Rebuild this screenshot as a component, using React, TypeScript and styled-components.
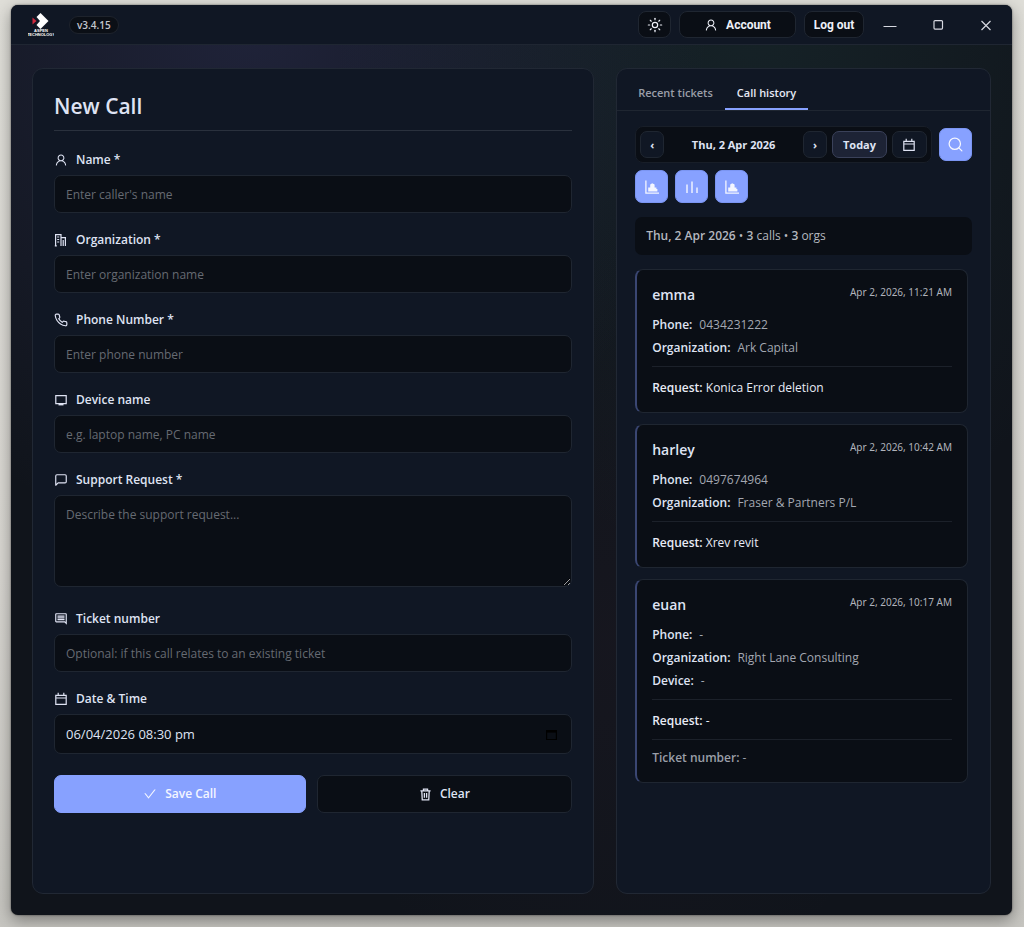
import React, { useState } from "react";
import styled, { createGlobalStyle, css } from "styled-components";
import { LuSun, LuMessageSquare, LuPhone, LuSearch } from "react-icons/lu";
import { AiOutlineUser, AiOutlineCheck } from "react-icons/ai";
import { MdOutlineComment } from "react-icons/md";

const c = {
  text: "#dfe3f3",
  muted: "#9a9ea8",
  line: "#1f2631",
  panel: "#101724",
  well: "#0a0e15",
  accent: "#87a1ff",
};

const GlobalStyle = createGlobalStyle`
  * { box-sizing: border-box; }
  body {
    margin: 0;
    min-height: 100vh;
    background: linear-gradient(180deg, #dfded8 0%, #d8d6d1 60%, #c6c5c0 100%);
    color: ${c.text};
    font-family: "Open Sans", "Noto Sans", sans-serif;
    font-size: 12px;
    line-height: 18px;
  }
  button, input, textarea { font: inherit; color: inherit; }
  button { cursor: pointer; padding: 0; }
  svg { display: block; flex: none; }
`;

const AppWindow = styled.div`
  display: flex;
  flex-direction: column;
  min-height: calc(100vh - 17px);
  margin: 5px 12px 12px 11px;
  border-radius: 7px;
  overflow: hidden;
  box-shadow: 0 0 2px rgba(0, 0, 0, 0.6), 0 5px 16px rgba(0, 0, 0, 0.38);
  background:
    radial-gradient(ellipse 460px 560px at 24% 0%, rgba(110, 110, 210, 0.17), transparent),
    radial-gradient(ellipse 420px 560px at 74% 0%, rgba(60, 130, 120, 0.13), transparent),
    radial-gradient(ellipse 300px 400px at 60% 70%, rgba(120, 60, 90, 0.06), transparent),
    #10141b;
`;

const TitleBar = styled.header`
  display: flex;
  align-items: center;
  height: 40px;
  padding: 0 19px 0 17px;
  background: #101724;
  border-bottom: 1px solid #1f2632;
`;

const Version = styled.span`
  margin-left: 15px;
  padding: 0 7px;
  border: 1px solid #1e232c;
  border-radius: 9px;
  background: #0b0f16;
  color: #c3c6ce;
  font-size: 10px;
  font-weight: 600;
  line-height: 16px;
`;

const TitleActions = styled.div`
  display: flex;
  gap: 8px;
  margin-left: auto;
`;

const TitleButton = styled.button<{ $width: number }>`
  display: flex;
  align-items: center;
  justify-content: center;
  gap: 8px;
  width: ${(p) => p.$width}px;
  height: 27px;
  border: 1px solid ${c.line};
  border-radius: 8px;
  background: ${c.well};
  font-family: Roboto, sans-serif;
  font-size: 12px;
  font-weight: 700;
  color: #eef0f8;
`;

const WindowControls = styled.div`
  display: flex;
  gap: 34px;
  margin-left: 19px;
`;

const WindowButton = styled.button`
  display: grid;
  place-items: center;
  width: 14px;
  height: 20px;
  border: 0;
  background: none;
  color: #d6d8e0;
`;

const Main = styled.main`
  display: grid;
  grid-template-columns: 3fr 2fr;
  gap: 22px;
  flex: 1;
  padding: 23px 21px 21px;
`;

const Panel = styled.section`
  min-width: 0;
  border: 1px solid #212834;
  border-radius: 11px;
  background: ${c.panel};
`;

const FormPanel = styled(Panel)`
  padding: 21px;
`;

const Title = styled.h1`
  margin: 0 0 20px;
  padding: 1px 0 9px;
  border-bottom: 1px solid #2a313d;
  font-size: 21px;
  font-weight: 600;
  line-height: 30px;
`;

const Form = styled.form`
  display: flex;
  flex-direction: column;
  gap: 18px;
`;

const Field = styled.div`
  display: flex;
  flex-direction: column;
  gap: 6px;
`;

const FieldLabel = styled.label`
  display: flex;
  align-items: center;
  gap: 8px;
  font-weight: 600;
`;

const wellStyle = css`
  width: 100%;
  border: 1px solid ${c.line};
  border-radius: 7px;
  outline: none;
  background: ${c.well};
`;

const TextInput = styled.input`
  ${wellStyle}
  height: 38px;
  padding: 0 11px;
  &::placeholder { color: #666a72; opacity: 1; }
`;

const TextArea = styled.textarea`
  ${wellStyle}
  display: block;
  height: 92px;
  margin-bottom: 5px;
  padding: 10px 11px;
  resize: vertical;
  &::placeholder { color: #666a72; opacity: 1; }
`;

const DateBox = styled.div`
  ${wellStyle}
  display: flex;
  align-items: center;
  height: 40px;
  padding: 0 13px 0 11px;
`;

const DateInput = styled.input`
  flex: 1;
  min-width: 0;
  padding: 0;
  border: 0;
  outline: none;
  background: none;
  font-size: 13px;
`;

const PickerButton = styled.button`
  border: 0;
  background: none;
  color: #000;
`;

const FormActions = styled.div`
  display: grid;
  grid-template-columns: 251fr 255fr;
  gap: 11px;
  margin-top: 3px;
`;

const ActionButton = styled.button<{ $primary?: boolean }>`
  display: flex;
  align-items: center;
  justify-content: center;
  gap: 8px;
  height: 38px;
  border: 1px solid ${(p) => (p.$primary ? c.accent : c.line)};
  border-radius: 7px;
  background: ${(p) => (p.$primary ? c.accent : c.well)};
  color: ${(p) => (p.$primary ? "#f4f6ff" : c.text)};
  font-weight: 600;
`;

const Tabs = styled.div`
  display: flex;
  padding: 8px 9px 0;
  border-bottom: 1px solid ${c.line};
`;

const Tab = styled.button<{ $active: boolean }>`
  height: 33px;
  padding: 0 12px;
  border: 0;
  border-bottom: 2px solid ${(p) => (p.$active ? c.accent : "transparent")};
  background: none;
  color: ${(p) => (p.$active ? "#e6e9f6" : c.muted)};
  font-size: 11px;
  font-weight: 600;
`;

const History = styled.div`
  padding: 15px 18px;
`;

const Toolbar = styled.div`
  display: flex;
  align-items: center;
  gap: 7px;
  margin-bottom: 7px;
`;

const DayNav = styled.div`
  display: flex;
  align-items: center;
  gap: 5px;
  flex: 1;
  padding: 4px;
  border: 1px solid #181e28;
  border-radius: 8px;
  background: ${c.well};
`;

const NavButton = styled.button<{ $width: number; $active?: boolean }>`
  display: grid;
  place-items: center;
  width: ${(p) => p.$width}px;
  height: 27px;
  border: 1px solid ${(p) => (p.$active ? "#3a4159" : c.line)};
  border-radius: 7px;
  background: ${(p) => (p.$active ? "#1d2335" : c.panel)};
  color: ${c.text};
  font-size: 11px;
  font-weight: 700;
`;

const DayLabel = styled.span`
  flex: 1;
  text-align: center;
  font-size: 11px;
  font-weight: 700;
`;

const IconButton = styled.button`
  display: grid;
  place-items: center;
  width: 33px;
  height: 33px;
  border: 1px solid #7b95f2;
  border-radius: 7px;
  background: ${c.accent};
  color: #f4f6ff;
`;

const Summary = styled.p`
  margin: 14px 0;
  padding: 10px 11px;
  border-radius: 7px;
  background: ${c.well};
  color: #b4b7bf;
`;

const CardList = styled.div`
  display: flex;
  flex-direction: column;
  gap: 11px;
  padding-right: 4px;
`;

const Card = styled.article`
  padding: 13px 15px 15px;
  border: 1px solid ${c.line};
  border-left: 2px solid #3a4672;
  border-radius: 8px;
  background: ${c.well};
`;

const CardHead = styled.header`
  display: flex;
  justify-content: space-between;
  margin-bottom: 7px;
`;

const Caller = styled.h2`
  margin: 0;
  font-size: 14px;
  font-weight: 600;
  line-height: 23px;
`;

const Stamp = styled.time`
  color: #b0b3bb;
  font-family: "Noto Sans", sans-serif;
  font-size: 10px;
  line-height: 18px;
`;

const Detail = styled.div`
  display: flex;
  gap: 7px;
  line-height: 23px;
  color: #a3a7b1;
  strong { color: ${c.text}; }
`;

const Note = styled.div<{ $quiet?: boolean }>`
  margin-top: ${(p) => (p.$quiet ? 9 : 7)}px;
  padding-top: ${(p) => (p.$quiet ? 9 : 12)}px;
  border-top: 1px solid #1c212a;
  color: ${(p) => (p.$quiet ? c.muted : "#e8ebf6")};
`;

const Strong = styled.strong`
  font-weight: 600;
`;

const Logo = () => (
  <svg width="26" height="24" viewBox="0 0 26 24" role="img" aria-label="Aspen Technology">
    <path d="M8.500 4 12.500 0 20.500 8 12.500 16 8.500 12 12 8Z" fill="#fff" />
    <path d="M4.500 4.500 8.500 8 4.500 11.500Z" fill="#d02b3f" />
    <text x="13" y="19" fontSize="4" fontWeight="700" textAnchor="middle" fill="#fff" fontFamily="Liberation Sans, sans-serif">ASPEN</text>
    <text x="13" y="23" fontSize="4" fontWeight="700" textAnchor="middle" fill="#fff" fontFamily="Liberation Sans, sans-serif">TECHNOLOGY</text>
  </svg>
);

const stroke = { fill: "none", stroke: "currentColor", strokeWidth: 1.2 };

const BuildingsIcon = () => (
  <svg width="14" height="14" viewBox="0 0 14 14" {...stroke}>
    <path d="M1.600 13V1.600H7V13M3.200 4h2M3.200 6.500h2M3.200 9h2M7 4.600h4.400V13M9.200 7v6M.8 12.800h2" />
  </svg>
);
const MonitorIcon = () => (
  <svg width="14" height="14" viewBox="0 0 14 14" {...stroke}>
    <path d="M1.800 2.600h10.400v8H1.800z" />
    <path d="M4.500 11.500h5" strokeWidth="1.800" />
  </svg>
);
const CalendarIcon = () => (
  <svg width="14" height="14" viewBox="0 0 14 14" {...stroke}>
    <path d="M1.800 3.400h10.400v9H1.800zM1.800 6h10.400M4.200 3.400V.8M9.800 3.400V.8" />
  </svg>
);
const PickerIcon = () => (
  <svg width="13" height="13" viewBox="0 0 13 13" {...stroke}>
    <path d="M1.600 2.500h9.800v9H1.600z" />
    <path d="M1.600 3.500h9.800" strokeWidth="2.200" />
  </svg>
);
const TrashIcon = () => (
  <svg width="13" height="13" viewBox="0 0 14 14" {...stroke} strokeWidth={1.400}>
    <path d="M1.500 3.200h11M4.800 3V1.300h4.400V3M3 3.200l.5 9.500h7l.5-9.500M5.800 5.500v5M8.200 5.500v5" />
  </svg>
);
const BarsIcon = () => (
  <svg width="16" height="16" viewBox="0 0 16 16" {...stroke} strokeWidth={1.400}>
    <path d="M3 5.500V14M8 2.500V14M13 8.500V14" />
  </svg>
);
const StepChartIcon = () => (
  <svg width="16" height="16" viewBox="0 0 16 16" {...stroke} strokeWidth={1.300}>
    <path d="M1.900 1.500v12.600H15" />
    <path d="M4.200 12.600V8.400h2V5.600l2-1.400 2.400 1.400v2.800h1.800v1.600h1v2.600z" fill="currentColor" stroke="none" />
  </svg>
);

type Call = {
  name: string;
  at: string;
  phone: string;
  org: string;
  device?: string;
  request: string;
  ticket?: string;
};

const calls: Call[] = [
  { name: "emma", at: "Apr 2, 2026, 11:21 AM", phone: "0434231222", org: "Ark Capital", request: "Konica Error deletion" },
  { name: "harley", at: "Apr 2, 2026, 10:42 AM", phone: "0497674964", org: "Fraser & Partners P/L", request: "Xrev revit" },
  { name: "euan", at: "Apr 2, 2026, 10:17 AM", phone: "-", org: "Right Lane Consulting", device: "-", request: "-", ticket: "-" },
];

const CallCard = ({ call }: { call: Call }) => (
  <Card>
    <CardHead>
      <Caller>{call.name}</Caller>
      <Stamp>{call.at}</Stamp>
    </CardHead>
    <Detail><Strong>Phone:</Strong><span>{call.phone}</span></Detail>
    <Detail><Strong>Organization:</Strong><span>{call.org}</span></Detail>
    {call.device && <Detail><Strong>Device:</Strong><span>{call.device}</span></Detail>}
    <Note><Strong>Request:</Strong> {call.request}</Note>
    {call.ticket && <Note $quiet><Strong>Ticket number:</Strong> {call.ticket}</Note>}
  </Card>
);

type LabelledProps = { id: string; label: string; icon: React.ReactNode; children: React.ReactNode };

const Labelled = ({ id, label, icon, children }: LabelledProps) => (
  <Field>
    <FieldLabel htmlFor={id}>{icon}{label}</FieldLabel>
    {children}
  </Field>
);

export default function App() {
  const [tab, setTab] = useState("Call history");
  return (
    <>
      <GlobalStyle />
      <AppWindow>
        <TitleBar>
          <Logo />
          <Version>v3.4.15</Version>
          <TitleActions>
            <TitleButton $width={33} aria-label="Toggle theme"><LuSun size={16} strokeWidth={1.8} /></TitleButton>
            <TitleButton $width={117}><AiOutlineUser size={14} />Account</TitleButton>
            <TitleButton $width={60}>Log out</TitleButton>
          </TitleActions>
          <WindowControls>
            <WindowButton aria-label="Minimize">
              <svg width="14" height="14" viewBox="0 0 14 14" {...stroke} strokeWidth={1}><path d="M.5 8.500h13" /></svg>
            </WindowButton>
            <WindowButton aria-label="Maximize">
              <svg width="14" height="14" viewBox="0 0 14 14" {...stroke}><rect x="3" y="2.600" width="8.500" height="8.500" rx="1" /></svg>
            </WindowButton>
            <WindowButton aria-label="Close">
              <svg width="14" height="14" viewBox="0 0 14 14" {...stroke}><path d="M2.500 3l9 9M11.500 3l-9 9" /></svg>
            </WindowButton>
          </WindowControls>
        </TitleBar>
        <Main>
          <FormPanel>
            <Title>New Call</Title>
            <Form onSubmit={(e) => e.preventDefault()}>
              <Labelled id="name" label="Name *" icon={<AiOutlineUser size={14} />}>
                <TextInput id="name" placeholder="Enter caller's name" />
              </Labelled>
              <Labelled id="org" label="Organization *" icon={<BuildingsIcon />}>
                <TextInput id="org" placeholder="Enter organization name" />
              </Labelled>
              <Labelled id="phone" label="Phone Number *" icon={<LuPhone size={14} />}>
                <TextInput id="phone" type="tel" placeholder="Enter phone number" />
              </Labelled>
              <Labelled id="device" label="Device name" icon={<MonitorIcon />}>
                <TextInput id="device" placeholder="e.g. laptop name, PC name" />
              </Labelled>
              <Labelled id="request" label="Support Request *" icon={<LuMessageSquare size={14} />}>
                <TextArea id="request" placeholder="Describe the support request..." />
              </Labelled>
              <Labelled id="ticket" label="Ticket number" icon={<MdOutlineComment size={14} />}>
                <TextInput id="ticket" placeholder="Optional: if this call relates to an existing ticket" />
              </Labelled>
              <Labelled id="when" label="Date & Time" icon={<CalendarIcon />}>
                <DateBox>
                  <DateInput id="when" defaultValue="06/04/2026 08:30 pm" />
                  <PickerButton type="button" aria-label="Pick date and time"><PickerIcon /></PickerButton>
                </DateBox>
              </Labelled>
              <FormActions>
                <ActionButton type="submit" $primary><AiOutlineCheck size={14} />Save Call</ActionButton>
                <ActionButton type="reset"><TrashIcon />Clear</ActionButton>
              </FormActions>
            </Form>
          </FormPanel>
          <Panel>
            <Tabs role="tablist">
              {["Recent tickets", "Call history"].map((t) => (
                <Tab key={t} role="tab" aria-selected={t === tab} $active={t === tab} onClick={() => setTab(t)}>{t}</Tab>
              ))}
            </Tabs>
            <History>
              <Toolbar>
                <DayNav>
                  <NavButton $width={24} aria-label="Previous day">‹</NavButton>
                  <DayLabel>Thu, 2 Apr 2026</DayLabel>
                  <NavButton $width={24} aria-label="Next day">›</NavButton>
                  <NavButton $width={55} $active>Today</NavButton>
                  <NavButton $width={35} aria-label="Pick a day"><CalendarIcon /></NavButton>
                </DayNav>
                <IconButton aria-label="Search calls"><LuSearch size={17} strokeWidth={1.8} /></IconButton>
              </Toolbar>
              <Toolbar>
                <IconButton aria-label="Daily chart"><StepChartIcon /></IconButton>
                <IconButton aria-label="Bar chart"><BarsIcon /></IconButton>
                <IconButton aria-label="Organization chart"><StepChartIcon /></IconButton>
              </Toolbar>
              <Summary><Strong>Thu, 2 Apr 2026</Strong> • <Strong>3</Strong> calls • <Strong>3</Strong> orgs</Summary>
              <CardList>
                {calls.map((call) => <CallCard key={call.name} call={call} />)}
              </CardList>
            </History>
          </Panel>
        </Main>
      </AppWindow>
    </>
  );
}
